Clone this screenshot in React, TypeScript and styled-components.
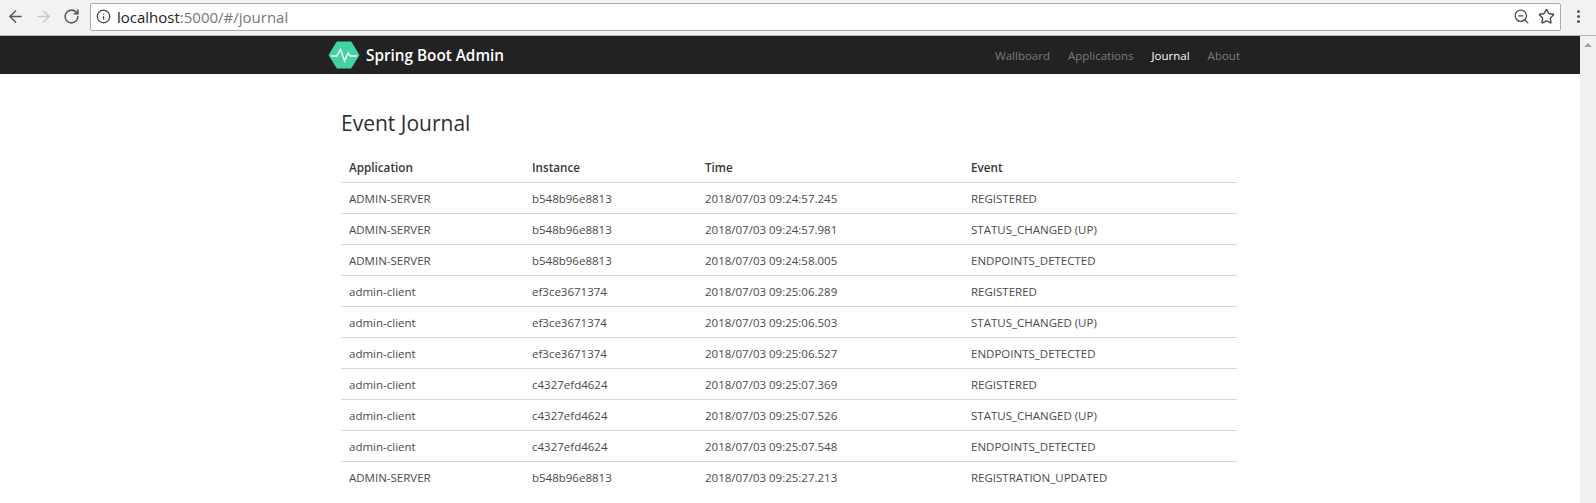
import React from "react";
import styled, { createGlobalStyle } from "styled-components";
import { ArrowLeft, ArrowRight, RotateCw, Info, ZoomOut, Star } from "lucide-react";

const GlobalStyle = createGlobalStyle`
  html, body {
    margin: 0;
    height: 100%;
    overflow: hidden;
    background: #fff;
    font-family: "Open Sans", "Noto Sans", sans-serif;
  }
`;

const BrowserBar = styled.div`
  display: flex;
  align-items: center;
  height: 36px;
  padding: 0 0 2px 1px;
  box-sizing: border-box;
  background: #f2f2f2;
  border-bottom: 1px solid #b8b8b8;
`;

const NavButton = styled.div<{ $muted?: boolean }>`
  display: flex;
  justify-content: center;
  width: 28px;
  color: ${(p) => (p.$muted ? "#c8c8c8" : "#5a5a5a")};
`;

const AddressBox = styled.div`
  flex: 1;
  display: flex;
  align-items: center;
  height: 28px;
  margin: 0 16px 0 5px;
  padding: 0 5px 0 5px;
  box-sizing: border-box;
  background: #fff;
  border: 1px solid #a9a9a9;
  border-radius: 2px;
  font-size: 15px;
  color: #777;
`;

const InfoIcon = styled(Info)`
  color: #444;
  margin-right: 6px;
`;

const Host = styled.span`
  color: #222;
`;

const Url = styled.span`
  flex: 1;
`;

const AddressIcon = styled.div`
  display: flex;
  margin-left: 8px;
  color: #4a4a4a;
`;

const MenuDots = styled.div`
  display: flex;
  flex-direction: column;
  gap: 2px;
  margin-right: 16px;
`;

const Dot = styled.i`
  display: block;
  width: 3px;
  height: 3px;
  border-radius: 50%;
  background: #555;
`;

const Viewport = styled.div`
  display: flex;
  height: 467px;
`;

const Page = styled.div`
  flex: 1;
  min-width: 0;
`;

const Scrollbar = styled.div`
  display: flex;
  justify-content: center;
  width: 16px;
  padding-top: 7px;
  box-sizing: border-box;
  background: #f1f1f1;
`;

const ScrollArrow = styled.div`
  width: 0;
  height: 0;
  border-left: 4px solid transparent;
  border-right: 4px solid transparent;
  border-bottom: 4px solid #a3a3a3;
`;

const Navbar = styled.nav`
  height: 38px;
  background: #222;
`;

const NavbarInner = styled.div`
  display: flex;
  align-items: center;
  justify-content: space-between;
  width: 912px;
  height: 100%;
  margin: 0 0 0 328px;
`;

const Brand = styled.div`
  display: flex;
  align-items: center;
  gap: 6px;
  font-size: 15.3px;
  font-weight: 600;
  color: #fff;
`;

const NavLinks = styled.div`
  display: flex;
  gap: 18px;
`;

const NavLink = styled.a<{ $active?: boolean }>`
  font-size: 11.5px;
  color: ${(p) => (p.$active ? "#fff" : "#7b7b7b")};
`;

const Content = styled.main`
  width: 896px;
  margin-left: 341px;
  padding-top: 35px;
`;

const Title = styled.h1`
  margin: 0 0 15px;
  font-size: 21px;
  line-height: 28px;
  font-weight: 500;
  color: #2f2f2f;
`;

const Table = styled.table`
  width: 100%;
  border-collapse: collapse;
  table-layout: fixed;
  font-size: 11.5px;
  color: #4a4a4a;
`;

const HeadCell = styled.th<{ $width?: number }>`
  box-sizing: border-box;
  width: ${(p) => (p.$width ? `${p.$width}px` : "auto")};
  height: 30px;
  padding: 0 8px;
  text-align: left;
  font-size: 11.7px;
  font-weight: 600;
  color: #363636;
  border-bottom: 1px solid #d6d6d6;
`;

const Cell = styled.td`
  height: 28px;
  padding: 2px 8px 0;
  border-bottom: 1px solid #d6d6d6;
`;

const LastRow = styled.tr`
  td {
    border-bottom: 0;
  }
`;

const LogoMark = () => (
  <svg width="32" height="28" viewBox="0 0 32 28">
    <path d="M9 1H23L31 14L23 27H9L1 14Z" fill="#42d3a5" stroke="#42d3a5" strokeLinejoin="round" />
    <path d="M3 15H9L12.5 8L16.5 20L20 12L22.5 15H29" fill="none" stroke="#fff" strokeWidth="1.4" />
  </svg>
);

const events = [
  ["ADMIN-SERVER", "b548b96e8813", "2018/07/03 09:24:57.245", "REGISTERED"],
  ["ADMIN-SERVER", "b548b96e8813", "2018/07/03 09:24:57.981", "STATUS_CHANGED (UP)"],
  ["ADMIN-SERVER", "b548b96e8813", "2018/07/03 09:24:58.005", "ENDPOINTS_DETECTED"],
  ["admin-client", "ef3ce3671374", "2018/07/03 09:25:06.289", "REGISTERED"],
  ["admin-client", "ef3ce3671374", "2018/07/03 09:25:06.503", "STATUS_CHANGED (UP)"],
  ["admin-client", "ef3ce3671374", "2018/07/03 09:25:06.527", "ENDPOINTS_DETECTED"],
  ["admin-client", "c4327efd4624", "2018/07/03 09:25:07.369", "REGISTERED"],
  ["admin-client", "c4327efd4624", "2018/07/03 09:25:07.526", "STATUS_CHANGED (UP)"],
  ["admin-client", "c4327efd4624", "2018/07/03 09:25:07.548", "ENDPOINTS_DETECTED"],
  ["ADMIN-SERVER", "b548b96e8813", "2018/07/03 09:25:27.213", "REGISTRATION_UPDATED"],
];

export default function App() {
  return (
    <>
      <GlobalStyle />
      <BrowserBar>
        <NavButton>
          <ArrowLeft size={19} strokeWidth={2} />
        </NavButton>
        <NavButton $muted>
          <ArrowRight size={19} strokeWidth={2} />
        </NavButton>
        <NavButton>
          <RotateCw size={17} strokeWidth={2.2} />
        </NavButton>
        <AddressBox>
          <InfoIcon size={15} strokeWidth={2} />
          <Url>
            <Host>localhost</Host>:5000/#/journal
          </Url>
          <AddressIcon>
            <ZoomOut size={17} strokeWidth={1.8} />
          </AddressIcon>
          <AddressIcon>
            <Star size={17} strokeWidth={2} />
          </AddressIcon>
        </AddressBox>
        <MenuDots>
          <Dot />
          <Dot />
          <Dot />
        </MenuDots>
      </BrowserBar>
      <Viewport>
        <Page>
          <Navbar>
            <NavbarInner>
              <Brand>
                <LogoMark />
                Spring Boot Admin
              </Brand>
              <NavLinks>
                <NavLink>Wallboard</NavLink>
                <NavLink>Applications</NavLink>
                <NavLink $active>Journal</NavLink>
                <NavLink>About</NavLink>
              </NavLinks>
            </NavbarInner>
          </Navbar>
          <Content>
            <Title>Event Journal</Title>
            <Table>
              <thead>
                <tr>
                  <HeadCell $width={183}>Application</HeadCell>
                  <HeadCell $width={173}>Instance</HeadCell>
                  <HeadCell $width={266}>Time</HeadCell>
                  <HeadCell>Event</HeadCell>
                </tr>
              </thead>
              <tbody>
                {events.map((row, i) => {
                  const Row = i === events.length - 1 ? LastRow : "tr";
                  return (
                    <Row key={i}>
                      {row.map((value) => (
                        <Cell key={value}>{value}</Cell>
                      ))}
                    </Row>
                  );
                })}
              </tbody>
            </Table>
          </Content>
        </Page>
        <Scrollbar>
          <ScrollArrow />
        </Scrollbar>
      </Viewport>
    </>
  );
}
